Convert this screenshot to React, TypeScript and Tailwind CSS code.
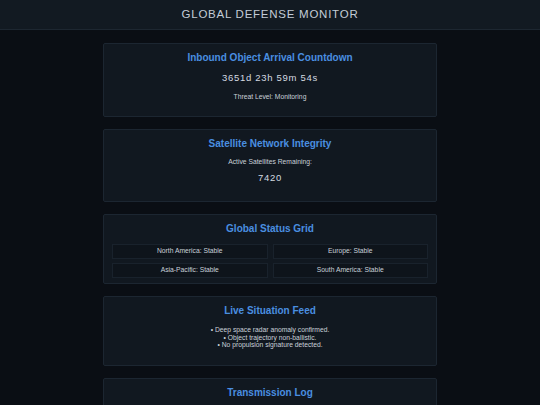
import React from 'react'

const regions = [
  'North America: Stable',
  'Europe: Stable',
  'Asia-Pacific: Stable',
  'South America: Stable',
]

const feed = [
  'Deep space radar anomaly confirmed.',
  'Object trajectory non-ballistic.',
  'No propulsion signature detected.',
]

function Card({ title, children, className = '' }: { title: string; children?: React.ReactNode; className?: string }) {
  return (
    <section className={`w-[334px] bg-[#111820] border border-[#1c2631] rounded-[2px] px-[8px] pt-[8px] text-center ${className}`}>
      <h2 className="text-[10px] leading-[12px] font-bold text-[#4a8fe0]">{title}</h2>
      {children}
    </section>
  )
}

export default function App() {
  return (
    <div
      className="min-h-screen bg-[#0a0e14] text-[#c9d1d9]"
      style={{ fontFamily: '"Liberation Sans", Arial, sans-serif' }}
    >
      <header className="h-[30px] bg-[#121a22] border-b border-[#1d2731] flex items-center justify-center">
        <h1 className="text-[11.5px] tracking-[0.75px] text-[#c3ccd7] font-normal">GLOBAL DEFENSE MONITOR</h1>
      </header>

      <main className="flex flex-col items-center gap-[12px] pt-[13px] pb-[20px]">
        <Card title="Inbound Object Arrival Countdown" className="pb-[8px]">
          <p className="mt-[8px] text-[9.5px] leading-[12px] tracking-[0.7px] text-[#d4dae1]">3651d 23h 59m 54s</p>
          <p className="mt-[9px] mb-[7px] text-[6.75px] leading-[8px] text-[#c9d1d9]">Threat Level: Monitoring</p>
        </Card>

        <Card title="Satellite Network Integrity" className="pb-[8px]">
          <p className="mt-[8px] text-[6.75px] leading-[8px]">Active Satellites Remaining:</p>
          <p className="mt-[6px] mb-[9px] text-[9.5px] leading-[12px] tracking-[0.7px] text-[#d4dae1]">7420</p>
        </Card>

        <Card title="Global Status Grid" className="pb-[5px]">
          <div className="mt-[9px] grid grid-cols-2 gap-x-[5px] gap-y-[4px]">
            {regions.map((r) => (
              <div
                key={r}
                className="h-[15px] flex items-center justify-center bg-[#0e141b] border border-[#19222c] text-[6.75px] text-[#c9d1d9]"
              >
                {r}
              </div>
            ))}
          </div>
        </Card>

        <Card title="Live Situation Feed" className="pb-[8px]">
          <div className="mt-[9px] mb-[8px] text-[6.75px] leading-[7.5px]">
            {feed.map((f) => (
              <p key={f}>• {f}</p>
            ))}
          </div>
        </Card>

        <Card title="Transmission Log" className="pb-[40px]" />
      </main>
    </div>
  )
}
